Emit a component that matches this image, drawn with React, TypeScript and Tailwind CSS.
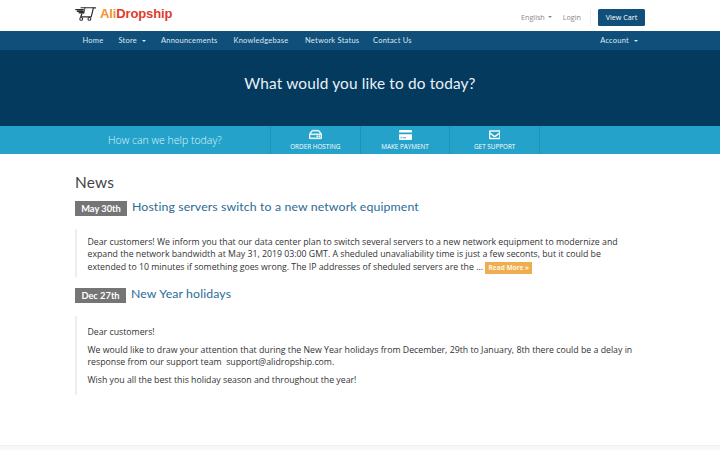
import type { ReactNode } from "react";
import { FaRegEnvelope, FaRegHdd } from "react-icons/fa";

const navItems = [
  { label: "Home", width: "w-[36px]" },
  { label: "Store", width: "w-[42.5px]", caret: true },
  { label: "Announcements", width: "w-[72.5px]" },
  { label: "Knowledgebase", width: "w-[71.5px]" },
  { label: "Network Status", width: "w-[68px]" },
  { label: "Contact Us", width: "w-[54px]" },
];

const CardIcon = () => (
  <svg width="13" height="10" viewBox="0 0 13 10" fill="currentColor">
    <path d="M1 0h11a1 1 0 0 1 1 1v1.4H0V1a1 1 0 0 1 1-1Z" />
    <path fillRule="evenodd" d="M0 4.2h13V9a1 1 0 0 1-1 1H1a1 1 0 0 1-1-1V4.2Zm1.6 3v1h1.7v-1H1.6Zm2.6 0v1h2.6v-1H4.2Z" />
  </svg>
);

const shortcuts = [
  { label: "ORDER HOSTING", icon: <FaRegHdd className="h-[13px] w-[13px]" stroke="currentColor" strokeWidth="18" /> },
  { label: "MAKE PAYMENT", icon: <CardIcon /> },
  { label: "GET SUPPORT", icon: <FaRegEnvelope className="h-[11.5px] w-[11.5px]" stroke="currentColor" strokeWidth="18" /> },
];

const Caret = () => (
  <span className="inline-block border-x-2 border-t-2 border-x-transparent border-t-current" />
);

const Logo = () => (
  <a className="flex items-center">
    <svg width="22" height="16" viewBox="0 0 22 16" fill="none" stroke="#2d2d2d" strokeLinecap="round" strokeLinejoin="round">
      <path d="M20.6 1.8h-2.2l-2.2 9H5.8l1-3" strokeWidth="1.2" />
      <path d="M6 1.8h12.4" strokeWidth="1.1" />
      <path d="M.8 3.6h7.4M2.4 5.2h6M4.2 6.8h4.2" strokeWidth="1.4" />
      <path d="M10 1.8L8.8 7.4" strokeWidth="0.9" />
      <circle cx="6.2" cy="12.9" r="1.4" strokeWidth="1.1" />
      <circle cx="14.4" cy="12.9" r="1.4" strokeWidth="1.1" />
    </svg>
    <span className="ml-[3px] font-['Liberation_Sans'] text-[13px] leading-[18px] font-bold tracking-[-0.12px] text-[#e03b2a]">
      <span className="text-[#f09330]">Ali</span>Dropship
    </span>
  </a>
);

const Heading = ({ date, title, dateWidth }: { date: string; title: string; dateWidth: string }) => (
  <div className="flex h-[16px] items-start font-[Lato,sans-serif]">
    <span className={`${dateWidth} mt-px h-[15px] bg-[#757575] text-center text-[9.3px] leading-[15px] font-bold text-white`}>
      {date}
    </span>
    <a className="ml-[5px] text-[12.3px] leading-[13px] tracking-[0.12px] whitespace-nowrap text-[#2a6c96]">{title}</a>
  </div>
);

const Quote = ({ children, className }: { children: ReactNode; className: string }) => (
  <blockquote className={`${className} border-l-[2.5px] border-[#eee] pl-[10.5px] text-[8.755px] leading-[12.6px] whitespace-nowrap text-[#333]`}>
    {children}
  </blockquote>
);

const App = () => {
  return (
    <div className="h-[450px] overflow-hidden bg-white font-['Open_Sans',sans-serif]">
      <header className="mx-auto flex h-[31px] w-[570px] items-start justify-between">
        <div className="pt-[5px]">
          <Logo />
        </div>
        <div className="flex items-center pt-[9px] text-[7.2px] text-[#888]">
          <a className="flex items-center gap-[3px]">English <Caret /></a>
          <a className="ml-[11px]">Login</a>
          <span className="ml-[9px] h-[16px] w-px bg-[#eee]" />
          <a className="ml-[7px] h-[17px] w-[47px] rounded-[1.5px] bg-[#0f4f79] text-center leading-[17px] text-white">View Cart</a>
        </div>
      </header>

      <nav className="h-[19px] bg-[#0f4f79] font-[Lato,sans-serif] text-[7.5px] tracking-[0.22px] text-[#dce8f0]">
        <div className="mx-auto flex h-full w-[570px] items-center pl-[7.5px]">
          {navItems.map((item) => (
            <a key={item.label} className={`${item.width} flex shrink-0 items-center gap-[5px] whitespace-nowrap`}>
              {item.label}
              {item.caret && <Caret />}
            </a>
          ))}
          <a className="mr-[7.5px] ml-auto flex items-center gap-[4.5px]">Account <Caret /></a>
        </div>
      </nav>

      <section className="h-[76px] bg-[#043a5e] pt-[23px] text-center font-[Lato,sans-serif] text-[15.4px] leading-[21px] tracking-[0.15px] text-[#e8f1f6]">
        <h2>What would you like to do today?</h2>
      </section>

      <section className="h-[28px] bg-[#25a2c9]">
        <div className="mx-auto flex h-full w-[570px]">
          <p className="w-[195px] pl-[33px] text-[10.5px] leading-[28px] font-light whitespace-nowrap text-[#dff5fc]">
            How can we help today?
          </p>
          <ul className="flex w-[270px] border-r border-[#1f92b6]">
            {shortcuts.map((s) => (
              <li key={s.label} className="flex w-[90px] flex-col items-center border-l border-[#1f92b6] pt-[2px] text-white">
                <span className="flex h-[13px] items-center">{s.icon}</span>
                <span className="text-[6.35px] leading-[11px]">{s.label}</span>
              </li>
            ))}
          </ul>
        </div>
      </section>

      <main className="mx-auto h-[291px] w-[570px] pt-[18px]">
        <h2 className="mb-[8px] font-[Lato,sans-serif] text-[15.4px] leading-[20px] tracking-[0.2px] text-[#444]">News</h2>

        <Heading date="May 30th" dateWidth="w-[52px]" title="Hosting servers switch to a new network equipment" />
        <Quote className="mt-[13px] h-[48px] pt-[6.5px]">
          <p>
            Dear customers! We inform you that our data center plan to switch several servers to a new network equipment to modernize and
            <br />
            expand the network bandwidth at May 31, 2019 03:00 GMT. A sheduled unavaliability time is just a few seconts, but it could be
            <br />
            extended to 10 minutes if something goes wrong. The IP addresses of sheduled servers are the ...{" "}
            <a className="inline-block h-[12px] w-[47px] bg-[#f0ad4e] text-center text-[6.5px] leading-[12px] font-bold text-[#fff6e6]">Read More »</a>
          </p>
        </Quote>

        <div className="mt-[10px]">
          <Heading date="Dec 27th" dateWidth="w-[51px]" title="New Year holidays" />
        </div>
        <Quote className="mt-[13px] h-[79px] space-y-[5px] pt-[10px]">
          <p>Dear customers!</p>
          <p>
            We would like to draw your attention that during the New Year holidays from December, 29th to January, 8th there could be a delay in
            <br />
            response from our support team&nbsp; support@alidropship.com.
          </p>
          <p>Wish you all the best this holiday season and throughout the year!</p>
        </Quote>
      </main>

      <footer className="h-[5px] border-t border-[#eee] bg-[#f8f8f8]" />
    </div>
  );
};

export default App;
